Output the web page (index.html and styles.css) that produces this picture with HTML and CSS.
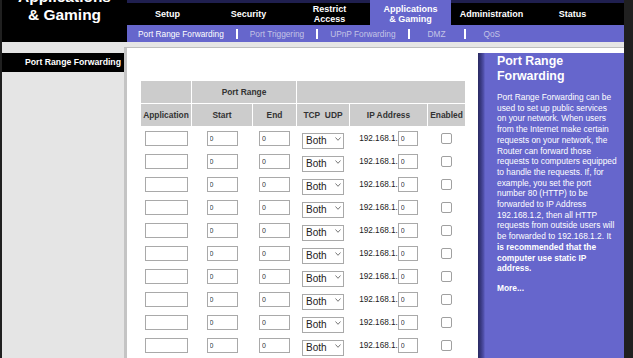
FILE: index.html
```html
<!DOCTYPE html>
<html lang="en">
<head>
    <meta charset="UTF-8">
    <meta name="viewport" content="width=device-width, initial-scale=1.0">
    <title>Applications &amp; Gaming - Port Range Forwarding</title>
    <link rel="stylesheet" href="styles.css">
</head>
<body>
    <div class="page">
        <div class="header">
            <div class="brand">
                <div class="brand-title">Applications<br>&amp; Gaming</div>
            </div>
            <div class="nav">
                <ul class="tabs">
                    <li>Setup</li>
                    <li>Security</li>
                    <li>Restrict<br>Access</li>
                    <li class="active">Applications<br>&amp; Gaming</li>
                    <li>Administration</li>
                    <li>Status</li>
                </ul>
                <ul class="subtabs">
                    <li class="current first">Port Range Forwarding</li>
                    <li class="sep"></li>
                    <li>Port Triggering</li>
                    <li class="sep"></li>
                    <li>UPnP Forwarding</li>
                    <li class="sep"></li>
                    <li class="short">DMZ</li>
                    <li class="sep"></li>
                    <li class="short">QoS</li>
                </ul>
            </div>
        </div>

        <div class="body">
            <div class="side">
                <div class="side-label">Port Range Forwarding</div>
            </div>
            <div class="main">
                <div class="strip"></div>
                <div class="content">
                    <div class="form">
                        <table class="ports">
                            <colgroup>
                                <col style="width: 50px">
                                <col style="width: 60px">
                                <col style="width: 43px">
                                <col style="width: 52px">
                                <col style="width: 77px">
                                <col style="width: 37px">
                            </colgroup>
                            <tr>
                                <th></th>
                                <th colspan="2">Port Range</th>
                                <th colspan="3"></th>
                            </tr>
                            <tr>
                                <th>Application</th>
                                <th>Start</th>
                                <th>End</th>
                                <th>TCP&nbsp;&nbsp;UDP</th>
                                <th>IP Address</th>
                                <th>Enabled</th>
                            </tr>
                            <tr>
                                <td><input class="app" type="text"></td>
                                <td><input class="port" type="text" value="0"></td>
                                <td><input class="port" type="text" value="0"></td>
                                <td><span class="select"><select><option>Both</option><option>TCP</option><option>UDP</option></select><svg viewBox="0 0 6 4" width="6" height="4"><polyline points="0.5,0.5 3,3.3 5.5,0.5" fill="none" stroke="#777" stroke-width="1"/></svg></span></td>
                                <td><div class="ip"><span>192.168.1.</span><input type="text" value="0"></div></td>
                                <td><input type="checkbox"></td>
                            </tr>
                            <tr>
                                <td><input class="app" type="text"></td>
                                <td><input class="port" type="text" value="0"></td>
                                <td><input class="port" type="text" value="0"></td>
                                <td><span class="select"><select><option>Both</option><option>TCP</option><option>UDP</option></select><svg viewBox="0 0 6 4" width="6" height="4"><polyline points="0.5,0.5 3,3.3 5.5,0.5" fill="none" stroke="#777" stroke-width="1"/></svg></span></td>
                                <td><div class="ip"><span>192.168.1.</span><input type="text" value="0"></div></td>
                                <td><input type="checkbox"></td>
                            </tr>
                            <tr>
                                <td><input class="app" type="text"></td>
                                <td><input class="port" type="text" value="0"></td>
                                <td><input class="port" type="text" value="0"></td>
                                <td><span class="select"><select><option>Both</option><option>TCP</option><option>UDP</option></select><svg viewBox="0 0 6 4" width="6" height="4"><polyline points="0.5,0.5 3,3.3 5.5,0.5" fill="none" stroke="#777" stroke-width="1"/></svg></span></td>
                                <td><div class="ip"><span>192.168.1.</span><input type="text" value="0"></div></td>
                                <td><input type="checkbox"></td>
                            </tr>
                            <tr>
                                <td><input class="app" type="text"></td>
                                <td><input class="port" type="text" value="0"></td>
                                <td><input class="port" type="text" value="0"></td>
                                <td><span class="select"><select><option>Both</option><option>TCP</option><option>UDP</option></select><svg viewBox="0 0 6 4" width="6" height="4"><polyline points="0.5,0.5 3,3.3 5.5,0.5" fill="none" stroke="#777" stroke-width="1"/></svg></span></td>
                                <td><div class="ip"><span>192.168.1.</span><input type="text" value="0"></div></td>
                                <td><input type="checkbox"></td>
                            </tr>
                            <tr>
                                <td><input class="app" type="text"></td>
                                <td><input class="port" type="text" value="0"></td>
                                <td><input class="port" type="text" value="0"></td>
                                <td><span class="select"><select><option>Both</option><option>TCP</option><option>UDP</option></select><svg viewBox="0 0 6 4" width="6" height="4"><polyline points="0.5,0.5 3,3.3 5.5,0.5" fill="none" stroke="#777" stroke-width="1"/></svg></span></td>
                                <td><div class="ip"><span>192.168.1.</span><input type="text" value="0"></div></td>
                                <td><input type="checkbox"></td>
                            </tr>
                            <tr>
                                <td><input class="app" type="text"></td>
                                <td><input class="port" type="text" value="0"></td>
                                <td><input class="port" type="text" value="0"></td>
                                <td><span class="select"><select><option>Both</option><option>TCP</option><option>UDP</option></select><svg viewBox="0 0 6 4" width="6" height="4"><polyline points="0.5,0.5 3,3.3 5.5,0.5" fill="none" stroke="#777" stroke-width="1"/></svg></span></td>
                                <td><div class="ip"><span>192.168.1.</span><input type="text" value="0"></div></td>
                                <td><input type="checkbox"></td>
                            </tr>
                            <tr>
                                <td><input class="app" type="text"></td>
                                <td><input class="port" type="text" value="0"></td>
                                <td><input class="port" type="text" value="0"></td>
                                <td><span class="select"><select><option>Both</option><option>TCP</option><option>UDP</option></select><svg viewBox="0 0 6 4" width="6" height="4"><polyline points="0.5,0.5 3,3.3 5.5,0.5" fill="none" stroke="#777" stroke-width="1"/></svg></span></td>
                                <td><div class="ip"><span>192.168.1.</span><input type="text" value="0"></div></td>
                                <td><input type="checkbox"></td>
                            </tr>
                            <tr>
                                <td><input class="app" type="text"></td>
                                <td><input class="port" type="text" value="0"></td>
                                <td><input class="port" type="text" value="0"></td>
                                <td><span class="select"><select><option>Both</option><option>TCP</option><option>UDP</option></select><svg viewBox="0 0 6 4" width="6" height="4"><polyline points="0.5,0.5 3,3.3 5.5,0.5" fill="none" stroke="#777" stroke-width="1"/></svg></span></td>
                                <td><div class="ip"><span>192.168.1.</span><input type="text" value="0"></div></td>
                                <td><input type="checkbox"></td>
                            </tr>
                            <tr>
                                <td><input class="app" type="text"></td>
                                <td><input class="port" type="text" value="0"></td>
                                <td><input class="port" type="text" value="0"></td>
                                <td><span class="select"><select><option>Both</option><option>TCP</option><option>UDP</option></select><svg viewBox="0 0 6 4" width="6" height="4"><polyline points="0.5,0.5 3,3.3 5.5,0.5" fill="none" stroke="#777" stroke-width="1"/></svg></span></td>
                                <td><div class="ip"><span>192.168.1.</span><input type="text" value="0"></div></td>
                                <td><input type="checkbox"></td>
                            </tr>
                            <tr>
                                <td><input class="app" type="text"></td>
                                <td><input class="port" type="text" value="0"></td>
                                <td><input class="port" type="text" value="0"></td>
                                <td><span class="select"><select><option>Both</option><option>TCP</option><option>UDP</option></select><svg viewBox="0 0 6 4" width="6" height="4"><polyline points="0.5,0.5 3,3.3 5.5,0.5" fill="none" stroke="#777" stroke-width="1"/></svg></span></td>
                                <td><div class="ip"><span>192.168.1.</span><input type="text" value="0"></div></td>
                                <td><input type="checkbox"></td>
                            </tr>
                        </table>
                    </div>
                    <div class="help">
                        <h2>Port Range Forwarding</h2>
                        <p>Port Range Forwarding can be<br>
                        used to set up public services<br>
                        on your network. When users<br>
                        from the Internet make certain<br>
                        requests on your network, the<br>
                        Router can forward those<br>
                        requests to computers equipped<br>
                        to handle the requests. If, for<br>
                        example, you set the port<br>
                        number 80 (HTTP) to be<br>
                        forwarded to IP Address<br>
                        192.168.1.2, then all HTTP<br>
                        requests from outside users will<br>
                        be forwarded to 192.168.1.2. It<br>
                        <b>is recommended that the<br>
                        computer use static IP<br>
                        address.</b></p>
                        <p class="more"><b>More...</b></p>
                    </div>
                </div>
            </div>
        </div>
    </div>
</body>
</html>
```

FILE: styles.css
```css
body {
    margin: 0;
    height: 358px;
    overflow: hidden;
    background-color: #202020;
    font-family: "Liberation Sans", Arial, sans-serif;
}
ul {
    list-style: none;
    margin: 0;
    padding: 0;
}
.page {
    width: 622px;
    margin-left: 2px;
    height: 358px;
    display: flex;
    flex-direction: column;
}

/* header */
.header {
    display: flex;
    height: 42px;
    background-color: #000;
}
.brand {
    width: 125px;
    overflow: hidden;
    color: white;
    text-align: center;
}
.brand-title {
    margin-top: -12px;
    font-size: 15.5px;
    line-height: 18px;
    font-weight: bold;
}
.nav {
    flex: 1;
    display: flex;
    flex-direction: column;
}
.tabs {
    display: flex;
    height: 25px;
    background: linear-gradient(#1f1f4f 0, #1f1f4f 3px, #000 3px);
}
.tabs li {
    width: 81px;
    box-sizing: border-box;
    padding-top: 3px;
    display: flex;
    align-items: center;
    justify-content: center;
    text-align: center;
    color: white;
    font-size: 9px;
    line-height: 10px;
    font-weight: bold;
}
.tabs li.active {
    background-color: #6666cc;
}
.subtabs {
    display: flex;
    align-items: center;
    height: 17px;
    background-color: #6666cc;
}
.subtabs li {
    padding: 0 12px;
    font-size: 8.3px;
    color: #c4c4e6;
}
.subtabs li.first {
    padding-left: 11px;
}
.subtabs li.short {
    padding: 0 18px;
}
.subtabs li.current {
    color: white;
}
.subtabs li.sep {
    padding: 0;
    width: 2px;
    height: 10px;
    background-color: white;
}

/* body */
.body {
    flex: 1;
    display: flex;
    min-height: 0;
}
.side {
    width: 122px;
    background-color: #e5e5e5;
}
.side-label {
    margin-top: 11px;
    height: 19px;
    line-height: 19px;
    background-color: #000;
    color: white;
    font-size: 8.7px;
    font-weight: bold;
    text-align: right;
    padding-right: 3px;
}
.main {
    flex: 1;
    display: flex;
    flex-direction: column;
}
.strip {
    height: 5px;
    background-color: #e5e5e5;
    border-bottom: 1px solid #bdbdbd;
}
.content {
    flex: 1;
    display: flex;
    background-color: white;
}
.form {
    width: 338px;
    padding-left: 13px;
    border-left: 3px solid #c4c4c4;
}
.ports {
    margin-top: 32px;
    border-spacing: 1px;
    table-layout: fixed;
    width: 326px;
}
.ports th {
    height: 22px;
    padding: 0;
    background-color: #cccccc;
    color: #333;
    font-size: 8.4px;
    font-weight: bold;
}
.ports td {
    height: 22px;
    padding: 0;
    text-align: center;
}
.ports input[type="text"] {
    display: block;
    margin: 0 auto;
    box-sizing: border-box;
    height: 15px;
    padding: 0 2px;
    border: 1px solid #a9a9a9;
    background: white;
    font-family: "Liberation Sans", Arial, sans-serif;
    font-size: 7px;
    color: #333;
}
.ports input.app {
    width: 43px;
}
.ports input.port {
    width: 31px;
}
.select {
    position: relative;
    display: block;
    width: 42px;
    height: 16px;
    margin: 0 auto;
}
.select select {
    -webkit-appearance: none;
    appearance: none;
    width: 100%;
    height: 100%;
    margin: 0;
    padding: 0 0 0 3px;
    border: 1px solid #a9a9a9;
    border-radius: 0;
    background: white;
    font-family: "Liberation Sans", Arial, sans-serif;
    font-size: 10px;
    color: #222;
}
.select svg {
    position: absolute;
    right: 3px;
    top: 7px;
}
.ip {
    display: flex;
    align-items: center;
    justify-content: center;
}
.ip span {
    font-size: 8.2px;
    color: #222;
}
.ip input[type="text"] {
    width: 20px;
    margin: 0;
}
.ports input[type="checkbox"] {
    -webkit-appearance: none;
    appearance: none;
    display: block;
    margin: 0 auto;
    width: 11px;
    height: 11px;
    border: 1px solid #a0a0a0;
    border-radius: 2px;
    background: white;
}

/* help panel */
.help {
    width: 146px;
    margin-top: 5px;
    box-sizing: border-box;
    padding: 1px 3px 0 19px;
    background: linear-gradient(to right, #2a2a60 0, #3a3a84 3px, #5454b0 6px, #6666cc 7px);
    color: white;
}
.help h2 {
    margin: 0;
    font-size: 12.4px;
    line-height: 14.5px;
}
.help p {
    margin: 9px 0 0;
    font-size: 8.4px;
    line-height: 10.7px;
    white-space: nowrap;
}
.help p.more {
    margin-top: 9.3px;
}
```
